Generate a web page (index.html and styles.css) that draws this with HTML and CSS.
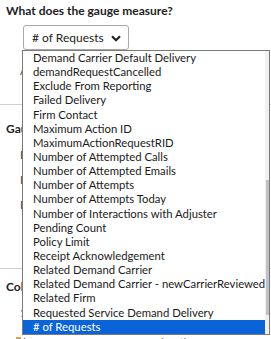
FILE: index.html
```html
<!DOCTYPE html>
<html>
<head>
<meta charset="utf-8">
<link rel="stylesheet" href="styles.css">
</head>
<body>
<div class="page">
  <section class="sec first">
    <div class="q">What does the gauge measure?</div>
    <div class="select">
      <span class="val"># of Requests</span>
      <svg class="chev" width="10" height="7" viewBox="0 0 10 7"><path d="M1 1.2 L5 5.2 L9 1.2" fill="none" stroke="#222" stroke-width="2.2"/></svg>
    </div>
    <div class="note">A</div>
  </section>
  <section class="sec">
    <div class="h">Gauge Type</div>
    <div class="opt">I</div>
    <div class="opt">I</div>
    <div class="opt">I</div>
  </section>
  <section class="sec">
    <div class="h">Colors</div>
    <div class="opt">1</div>
    <div class="range"><span class="sw"></span><span class="low">Low</span><span class="lt">less than</span></div>
  </section>

  <div class="dropdown">
    <ul class="items">
      <li>Demand Carrier Default Delivery</li>
      <li>demandRequestCancelled</li>
      <li>Exclude From Reporting</li>
      <li>Failed Delivery</li>
      <li>Firm Contact</li>
      <li>Maximum Action ID</li>
      <li>MaximumActionRequestRID</li>
      <li>Number of Attempted Calls</li>
      <li>Number of Attempted Emails</li>
      <li>Number of Attempts</li>
      <li>Number of Attempts Today</li>
      <li>Number of Interactions with Adjuster</li>
      <li>Pending Count</li>
      <li>Policy Limit</li>
      <li>Receipt Acknowledgement</li>
      <li>Related Demand Carrier</li>
      <li>Related Demand Carrier - newCarrierReviewed</li>
      <li>Related Firm</li>
      <li>Requested Service Demand Delivery</li>
      <li class="sel"># of Requests</li>
    </ul>
    <div class="scroll">
      <div class="arrow up"></div>
      <div class="track"><div class="thumb"></div></div>
      <div class="arrow down"></div>
    </div>
  </div>
</div>
</body>
</html>
```
FILE: styles.css
```css
html, body {
  margin: 0;
  padding: 0;
  background: #fff;
}
body {
  font-family: Lato, "Open Sans", sans-serif;
  color: #222;
  width: 271px;
  height: 339px;
  overflow: hidden;
}
.page {
  position: relative;
  height: 339px;
}
.sec {
  border-bottom: 1px solid #cfcfcf;
}
.sec.first {
  padding: 4px 0 0 6px;
  height: 100px;
}
.q {
  font-weight: 700;
  font-size: 12px;
  line-height: 14px;
}
.select {
  margin: 7px 0 0 17px;
  width: 106px;
  height: 25px;
  border: 1px solid #a9a9a9;
  border-radius: 3px;
  box-sizing: border-box;
  display: flex;
  align-items: center;
  justify-content: space-between;
  padding: 0 7px 0 8px;
  font-size: 12px;
  color: #222;
}
.val {
  white-space: nowrap;
}
.chev {
  margin-top: 1px;
}
.note {
  font-size: 11px;
  margin: 14px 0 0 14px;
  color: #555;
}
.sec:nth-child(2) {
  height: 164px;
  padding: 17px 0 0 6px;
  box-sizing: border-box;
}
.sec:nth-child(3) {
  border-bottom: 0;
  padding: 11px 0 0 6px;
}
.h {
  font-weight: 700;
  font-size: 12px;
  line-height: 14px;
}
.opt {
  font-size: 11px;
  margin: 12px 0 0 14px;
  color: #444;
}
.range {
  display: flex;
  align-items: center;
  font-size: 10px;
  margin-top: 16px;
  color: #444;
}
.sw {
  width: 5px;
  height: 8px;
  background: #c9a36a;
  margin-left: 10px;
}
.low {
  margin-left: 2px;
}
.lt {
  margin-left: 120px;
}
.dropdown {
  position: absolute;
  left: 22px;
  top: 50px;
  width: 248px;
  height: 285px;
  border: 1px solid #7a7a7a;
  box-sizing: border-box;
  background: #fff;
  display: flex;
  overflow: hidden;
}
.items {
  list-style: none;
  margin: 0;
  padding: 0;
  flex: 1;
  font-family: Lato, sans-serif;
  font-size: 11.3px;
  color: #1a1a1a;
}
.items li {
  height: 14.15px;
  line-height: 14.15px;
  padding-left: 10px;
  white-space: nowrap;
}
.items li.sel {
  background: #0b63d8;
  color: #fff;
}
.scroll {
  width: 17px;
  background: #f0f0f0;
  display: flex;
  flex-direction: column;
  align-items: center;
}
.arrow {
  height: 17px;
  width: 17px;
  position: relative;
}
.arrow::after {
  content: "";
  position: absolute;
  left: 5px;
  top: 6px;
  border-left: 4px solid transparent;
  border-right: 4px solid transparent;
}
.arrow.up::after {
  border-bottom: 4px solid #606060;
}
.arrow.down::after {
  top: 8px;
  border-top: 4px solid #a3a3a3;
}
.track {
  flex: 1;
  width: 17px;
  position: relative;
}
.thumb {
  position: absolute;
  left: 1px;
  right: 1px;
  top: 112px;
  bottom: 2px;
  background: #c1c1c1;
}
```
